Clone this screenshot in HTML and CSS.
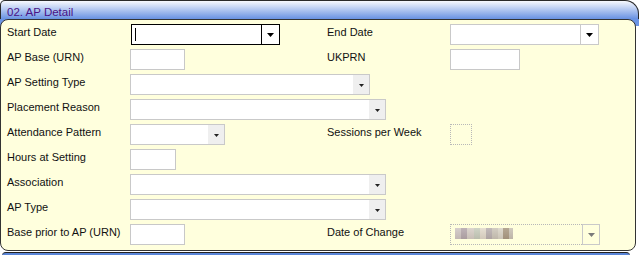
FILE: index.html
```html
<!DOCTYPE html>
<html lang="en">
<head>
  <meta charset="UTF-8" />
  <title>AP Detail</title>
  <link rel="stylesheet" href="styles.css">
</head>
<body>
  <div class="section">
    <div class="section-head">02. AP Detail</div>
    <div class="section-body">
      <div class="form">
        <label>Start Date</label>
        <div class="combo date focus">
          <span class="value"><span class="caret"></span></span>
          <span class="btn"><svg width="7" height="4" viewBox="0 0 7 4"><path d="M0 0h7L3.5 4z" fill="#000"/></svg></span>
        </div>
        <label>End Date</label>
        <div class="combo date w149">
          <span class="value"></span>
          <span class="btn"><svg width="7" height="4" viewBox="0 0 7 4"><path d="M0 0h7L3.5 4z" fill="#000"/></svg></span>
        </div>

        <label>AP Base (URN)</label>
        <div class="text w55"></div>
        <label>UKPRN</label>
        <div class="text w70"></div>

        <label>AP Setting Type</label>
        <div class="combo wide w240">
          <span class="value"></span>
          <span class="btn"><svg width="5" height="3" viewBox="0 0 5 3"><path d="M0 0h5L2.5 3z" fill="#222"/></svg></span>
        </div>

        <label>Placement Reason</label>
        <div class="combo wide w256">
          <span class="value"></span>
          <span class="btn"><svg width="5" height="3" viewBox="0 0 5 3"><path d="M0 0h5L2.5 3z" fill="#222"/></svg></span>
        </div>

        <label>Attendance Pattern</label>
        <div class="combo w95">
          <span class="value"></span>
          <span class="btn"><svg width="5" height="3" viewBox="0 0 5 3"><path d="M0 0h5L2.5 3z" fill="#222"/></svg></span>
        </div>
        <label>Sessions per Week</label>
        <div class="dotted"></div>

        <label>Hours at Setting</label>
        <div class="text w46 wide"></div>

        <label>Association</label>
        <div class="combo wide w256">
          <span class="value"></span>
          <span class="btn"><svg width="5" height="3" viewBox="0 0 5 3"><path d="M0 0h5L2.5 3z" fill="#222"/></svg></span>
        </div>

        <label>AP Type</label>
        <div class="combo wide w256">
          <span class="value"></span>
          <span class="btn"><svg width="5" height="3" viewBox="0 0 5 3"><path d="M0 0h5L2.5 3z" fill="#222"/></svg></span>
        </div>

        <label>Base prior to AP (URN)</label>
        <div class="text w55"></div>
        <label>Date of Change</label>
        <div class="combo date disabled w150">
          <span class="value"><span class="blur"></span></span>
          <span class="btn"><svg width="7" height="4" viewBox="0 0 7 4"><path d="M0 0h7L3.5 4z" fill="#7a7a7a"/></svg></span>
        </div>
      </div>
    </div>
  </div>
  <div class="next-head"></div>
</body>
</html>
```

FILE: styles.css
```css
body {
  margin: 0;
  background: #fff;
  font-family: 'Liberation Sans', Arial, sans-serif;
  font-size: 11px;
  color: #000;
}
.section {
  width: 639px;
  background: linear-gradient(#f4f7fd, #6b94e4 19px, #6b94e4 26px, #fff 26px);
  border-radius: 5px 14px 0 0;
}
.section-head {
  height: 14px;
  padding: 4px 0 0 6px;
  line-height: 14px;
  border: 1px solid #2a2a2a;
  border-bottom: none;
  border-radius: 5px 14px 0 0;
  background: linear-gradient(#f7f9fe, #6891e3);
  color: #4a1286;
  font-size: 11.5px;
}
.section-body {
  margin-right: 3px;
  height: 230px;
  background: #ffffdd;
  border: 1px solid #333;
  border-radius: 8px;
}
.form {
  display: grid;
  grid-template-columns: 123px 197px 123px 1fr;
  grid-auto-rows: 21px;
  row-gap: 4px;
  padding: 4px 0 0 6px;
}
.form label {
  line-height: 16px;
  white-space: nowrap;
  color: #111;
}
.wide {
  grid-column: span 3;
}
.text {
  height: 21px;
  box-sizing: border-box;
  border: 1px solid #c8c8c8;
  background: #fff;
}
.dotted {
  width: 22px;
  height: 21px;
  box-sizing: border-box;
  border: 1px dotted #b8b8b8;
}
.combo {
  display: flex;
  height: 21px;
  box-sizing: border-box;
  border: 1px solid #c9c9c9;
  background: #fff;
}
.combo .value {
  flex: 1;
  display: flex;
}
.combo .btn {
  width: 16px;
  background: #efefef;
  display: flex;
  align-items: center;
  justify-content: center;
  padding-top: 2px;
  box-sizing: border-box;
}
.combo.date .btn {
  width: 18px;
  background: #fff;
  border-left: 1px solid #c9c9c9;
  padding-top: 1px;
}
.combo.focus {
  width: 149px;
  margin-left: 1px;
  border-color: #000;
}
.combo.focus .btn {
  border-left-color: #000;
}
.caret {
  width: 1px;
  height: 13px;
  margin: 3px 0 0 3px;
  background: #000;
}
.combo.disabled {
  background: transparent;
  border: 1px dotted #b8b8b8;
  border-right: none;
}
.combo.disabled .btn {
  height: 21px;
  margin: -1px 0;
  border: 1px solid #c9c9c9;
  background: transparent;
}
.blur {
  width: 58px;
  height: 11px;
  margin: 3px 0 0 4px;
  background:
    linear-gradient(rgba(255,255,255,0.15), rgba(120,100,90,0.15)),
    linear-gradient(90deg, #cfc6c4 0 6px, #b3a6ab 6px 12px, #d6cec6 12px 19px, #c6ccbc 19px 25px,
      #e2dacb 25px 31px, #b7aeae 31px 37px, #cbc5b8 37px 43px, #d9d4c6 43px 48px, #a89880 48px 54px, #c9c2b4 54px 58px);
}
.w46 { width: 46px; }
.w55 { width: 55px; }
.w70 { width: 70px; }
.w95 { width: 95px; }
.w149 { width: 149px; }
.w150 { width: 150px; }
.w240 { width: 240px; }
.w256 { width: 256px; }
.next-head {
  height: 3px;
  margin: 1px 9px 0 2px;
  border-top: 1px solid #222;
  border-radius: 6px 6px 0 0;
  background: #5a86d8;
}
```
